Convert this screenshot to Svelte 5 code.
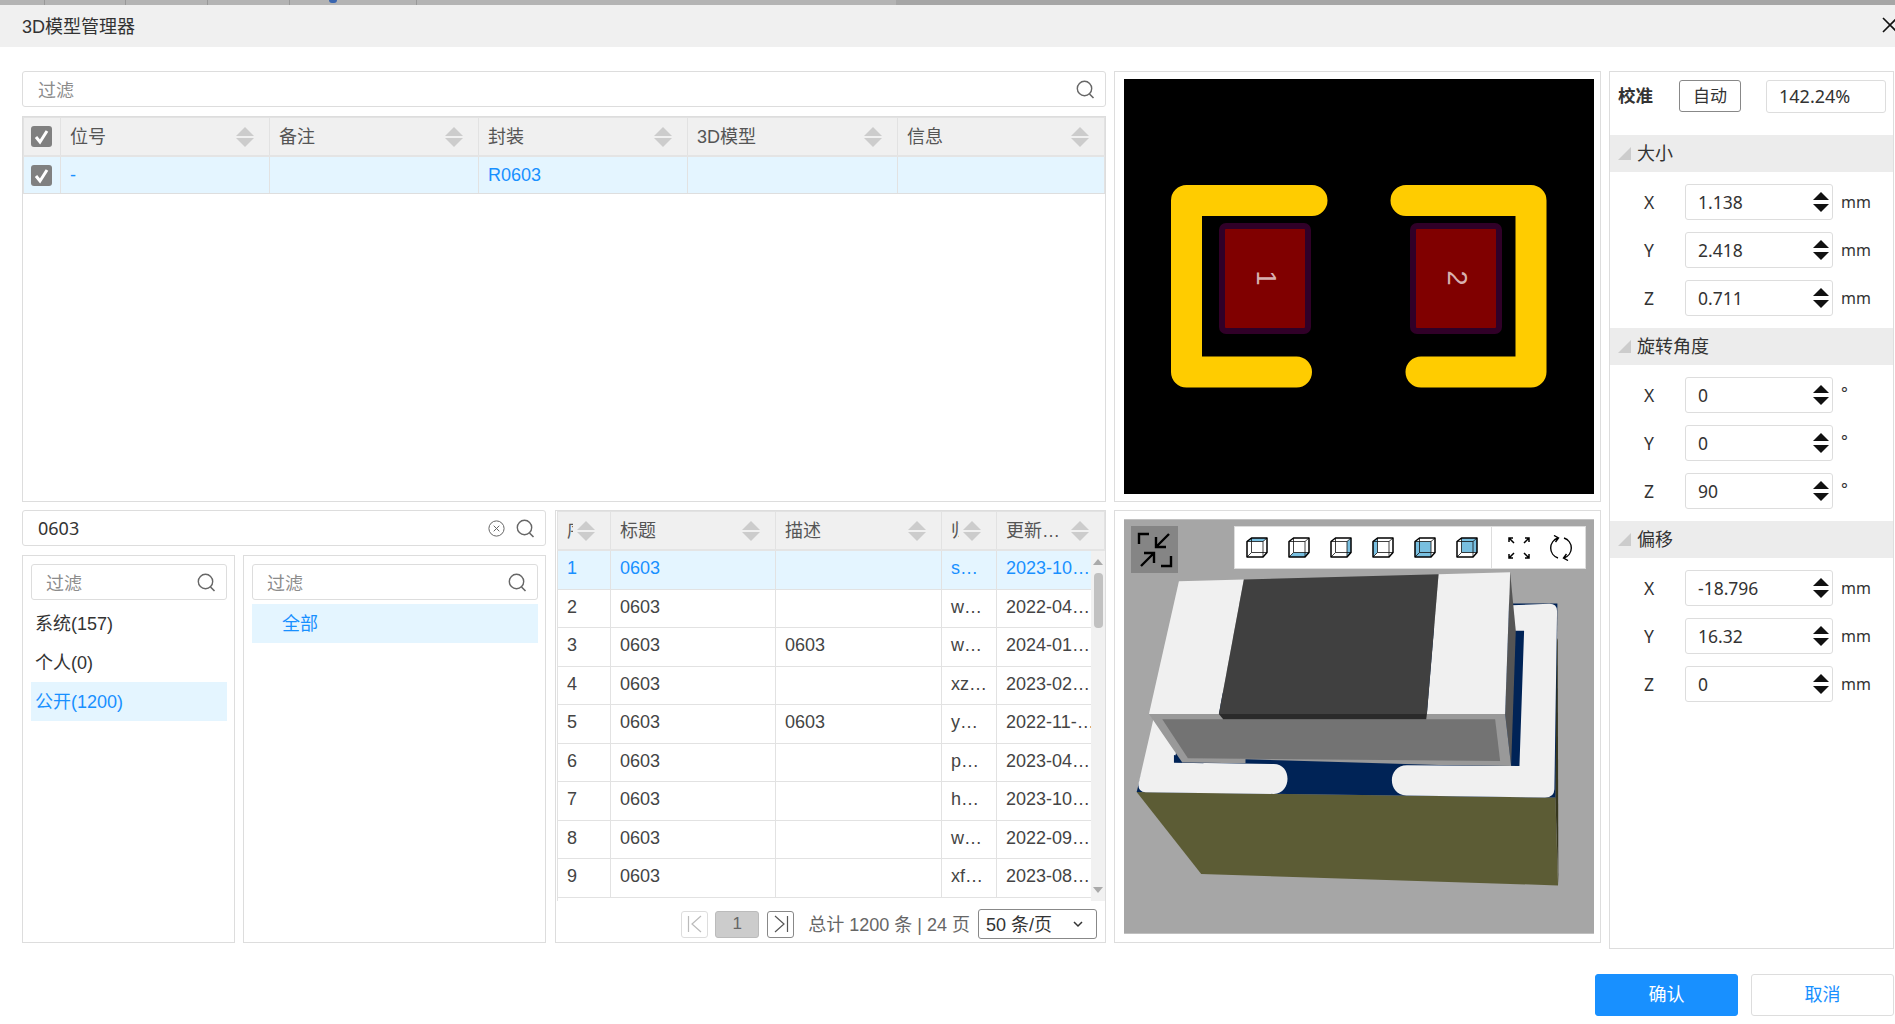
<script lang="ts">
  const partCols = [
    { title: '位号', w: 209 },
    { title: '备注', w: 209 },
    { title: '封装', w: 209 },
    { title: '3D模型', w: 210 },
    { title: '信息', w: 207 },
  ];
  const partRow = ['-', '', 'R0603', '', ''];

  const libCols = [
    { title: '序号', w: 53 },
    { title: '标题', w: 165 },
    { title: '描述', w: 166 },
    { title: '归属者', w: 55 },
    { title: '更新…', w: 108 },
  ];
  const libRows = [
    ['1', '0603', '', 's…', '2023-10…'],
    ['2', '0603', '', 'w…', '2022-04…'],
    ['3', '0603', '0603', 'w…', '2024-01…'],
    ['4', '0603', '', 'xz…', '2023-02…'],
    ['5', '0603', '0603', 'y…', '2022-11-…'],
    ['6', '0603', '', 'p…', '2023-04…'],
    ['7', '0603', '', 'h…', '2023-10…'],
    ['8', '0603', '', 'w…', '2022-09…'],
    ['9', '0603', '', 'xf…', '2023-08…'],
  ];

  const groups = [
    { name: '大小', unit: 'mm', vals: ['1.138', '2.418', '0.711'] },
    { name: '旋转角度', unit: '°', vals: ['0', '0', '90'] },
    { name: '偏移', unit: 'mm', vals: ['-18.796', '16.32', '0'] },
  ];
  const axes = ['X', 'Y', 'Z'];

  // which face of the cube is filled in each view button
  const views = [
    '1,4.5 5.5,1 21,1 17,4.5',
    '1,20 5.5,15.5 21,15.5 17,20',
    '17,4.5 21,1 21,15.5 17,20',
    '1,4.5 5.5,1 5.5,15.5 1,20',
    '1,4.5 17,4.5 17,20 1,20',
    '5.5,1 21,1 21,15.5 5.5,15.5',
  ];
</script>

{#snippet searchIcon()}
  <svg class="search" width="19" height="19" viewBox="0 0 19 19">
    <circle cx="8.5" cy="8.5" r="7.2" fill="none" stroke="#666" stroke-width="1.4" />
    <path d="M13.5 14 L17.5 18" stroke="#666" stroke-width="1.6" fill="none" />
  </svg>
{/snippet}

{#snippet sorter()}
  <span class="sorter"><i class="up"></i><i class="down"></i></span>
{/snippet}

{#snippet check()}
  <span class="check">
    <svg width="21" height="21" viewBox="0 0 21 21">
      <path d="M5 11 L9 16 L16 5" fill="none" stroke="#fff" stroke-width="3" />
    </svg>
  </span>
{/snippet}

<div class="page">
  <div class="backdrop">
    <span style="width:45px"></span>
    <span style="width:81px"></span>
    <span style="width:82px"></span>
    <span style="width:82px"></span>
    <span style="width:127px"><b class="dot"></b></span>
    <span class="wide"></span>
  </div>

  <header class="titlebar">
    <span>3D模型管理器</span>
    <svg class="close" width="16" height="16" viewBox="0 0 16 16">
      <path d="M1 1 L15 15 M15 1 L1 15" stroke="#111" stroke-width="1.6" />
    </svg>
  </header>

  <main class="main">
    <section class="top-left">
      <div class="input top-filter">
        <span class="ph">过滤</span>
        {@render searchIcon()}
      </div>
      <div class="parts">
        <div class="parts-head">
          <div class="cell chk">{@render check()}</div>
          {#each partCols as c}
            <div class="cell hcell" style="width:{c.w}px"><span class="hlabel">{c.title}</span>{@render sorter()}</div>
          {/each}
        </div>
        <div class="parts-row">
          <div class="cell chk">{@render check()}</div>
          {#each partCols as c, i}
            <div class="cell" style="width:{c.w}px">{partRow[i]}</div>
          {/each}
        </div>
      </div>
    </section>

    <section class="preview-2d">
      <svg width="470" height="415" viewBox="0 0 470 415">
        <rect width="470" height="415" fill="#000" />
        <path d="M188 121.5 H62.5 V293 H172.5" fill="none" stroke="#fc0" stroke-width="31" stroke-linecap="round" stroke-linejoin="round" />
        <path d="M282 121.5 H407 V293 H297" fill="none" stroke="#fc0" stroke-width="31" stroke-linecap="round" stroke-linejoin="round" />
        <rect x="98" y="147" width="86" height="105" rx="4" fill="#800000" stroke="#300028" stroke-width="6" />
        <rect x="289" y="147" width="86" height="105" rx="4" fill="#800000" stroke="#300028" stroke-width="6" />
        <text transform="translate(133 199) rotate(90)" class="pad-num" text-anchor="middle">1</text>
        <text transform="translate(324 199) rotate(90)" class="pad-num" text-anchor="middle">2</text>
      </svg>
    </section>

    <aside class="props">
      <div class="calib">
        <b>校准</b>
        <span class="auto">自动</span>
        <span class="scale">142.24%</span>
      </div>
      {#each groups as g}
        <div class="group-head"><i class="corner"></i><span>{g.name}</span></div>
        <div class="group-body">
          {#each g.vals as v, i}
            <div class="prop-row">
              <span class="axis">{axes[i]}</span>
              <div class="num">
                <span>{v}</span>
                <span class="spin"><i class="up"></i><i class="down"></i></span>
              </div>
              <span class="unit" class:deg={g.unit === '°'}>{g.unit}</span>
            </div>
          {/each}
        </div>
      {/each}
    </aside>

    <section class="bottom-left">
      <div class="browser">
        <div class="input lib-search">
          <span class="val">0603</span>
          <svg width="17" height="17" viewBox="0 0 17 17" class="clear">
            <circle cx="8.5" cy="8.5" r="7.6" fill="none" stroke="#666" stroke-width="1" />
            <path d="M5.7 5.7 L11.3 11.3 M11.3 5.7 L5.7 11.3" stroke="#666" stroke-width="1" />
          </svg>
          {@render searchIcon()}
        </div>
        <div class="trees">
          <div class="tree first">
            <div class="input small"><span class="ph">过滤</span>{@render searchIcon()}</div>
            <div class="item">系统(157)</div>
            <div class="item">个人(0)</div>
            <div class="item on">公开(1200)</div>
          </div>
          <div class="tree second">
            <div class="input small"><span class="ph">过滤</span>{@render searchIcon()}</div>
            <div class="item on sub">全部</div>
          </div>
        </div>
      </div>

      <div class="library">
        <div class="lib-head">
          {#each libCols as c}
            <div class="cell hcell" style="width:{c.w}px"><span class="hlabel">{c.title}</span>{@render sorter()}</div>
          {/each}
        </div>
        <div class="lib-main">
          <div class="lib-rows">
            {#each libRows as r, ri}
              <div class="lib-row" class:on={ri === 0}>
                {#each libCols as c, i}
                  <div class="cell" style="width:{c.w}px">{r[i]}</div>
                {/each}
              </div>
            {/each}
          </div>
          <div class="scrollbar">
            <i class="sb-up"></i>
            <b class="thumb"></b>
            <i class="sb-down"></i>
          </div>
        </div>
        <div class="pager">
          <span class="pg-btn dim">
            <svg width="16" height="18" viewBox="0 0 16 18"><path d="M1.5 1 V17 M14 1 L5 9 L14 17" fill="none" stroke="#bbb" stroke-width="1.2" /></svg>
          </span>
          <span class="pg-cur">1</span>
          <span class="pg-btn">
            <svg width="16" height="18" viewBox="0 0 16 18"><path d="M14.5 1 V17 M2 1 L11 9 L2 17" fill="none" stroke="#555" stroke-width="1.2" /></svg>
          </span>
          <span class="total">总计 1200 条 | 24 页</span>
          <span class="size">
            <span>50 条/页</span>
            <svg width="10" height="7" viewBox="0 0 10 7"><path d="M1 1 L5 5 L9 1" fill="none" stroke="#333" stroke-width="1.5" /></svg>
          </span>
        </div>
      </div>
    </section>

    <section class="preview-3d">
      <div class="stage">
        <svg width="470" height="415" viewBox="40 57 1412 1245">
          <rect x="40" y="57" width="1412" height="1245" fill="#a6a6a6" />
          <polygon points="78,876 1336,893 1344,1157 272,1123" fill="#5c5c35" />
          <polygon points="1336,400 1343,420 1345,1157 1336,893" fill="#36361e" />
          <polygon points="78,876 1336,893 1342,310 1200,310 140,640" fill="#002356" />
          <path d="M1205 315 L1318 311 Q1342 311 1341 335 L1333 868 Q1332 893 1305 893 L888 887 C830 885 830 796 890 796 L1228 798 L1242 392 L1205 392 Z" fill="#f0f0f0" />
          <path d="M130 650 L84 850 Q80 876 105 877 L490 882 C545 880 545 792 490 792 L190 788 L220 650 Z" fill="#f0f0f0" />
          <polygon points="190,765 190,788 280,790 232,775" fill="#002356" />
          <polygon points="1200,216 1217,392 1203,798 1185,642" fill="#555" />
          <polygon points="115,642 1185,642 1203,798 985,795 405,778 405,790 215,788" fill="#999" />
          <polygon points="155,658 1155,658 1170,783 232,775" fill="#737373" />
          <polygon points="205,243 400,238 325,642 115,642" fill="#f0f0f0" />
          <polygon points="985,222 1200,216 1185,642 950,642" fill="#f0f0f0" />
          <polygon points="400,238 985,222 950,642 325,642" fill="#404040" />
          <polygon points="325,642 950,642 948,658 338,658" fill="#2a2a2a" />
        </svg>
        <div class="shrink">
          <svg width="36" height="36" viewBox="0 0 36 36">
            <path d="M12 2 H2 V12 M34 24 V34 H24 M32 2 L19 15 M19 5 V15 H29 M4 34 L17 21 M7 21 H17 V31" fill="none" stroke="#000" stroke-width="2.4" />
          </svg>
        </div>
        <div class="toolbar">
          <div class="views">
            {#each views as face}
              <svg width="22" height="21" viewBox="0 0 22 21">
                <polygon points={face} fill="#78bfe0" />
                <g fill="none" stroke="#111" stroke-width="0.8">
                  <path d="M1 4.5 H17 V20 M17 4.5 L21 1 M5.5 1 V15.5 H21 M5.5 15.5 L1 20" />
                </g>
                <path d="M1 4.5 L5.5 1 H21 V15.5 L17 20 H1 Z" fill="none" stroke="#000" stroke-width="1.5" stroke-linejoin="round" />
              </svg>
            {/each}
          </div>
          <div class="fits">
            <svg width="24" height="24" viewBox="0 0 24 24">
              <path d="M2 6 V2 H6 M2 2 L7 7 M22 6 V2 H18 M22 2 L17 7 M2 18 V22 H6 M2 22 L7 17 M22 18 V22 H18 M22 22 L17 17" fill="none" stroke="#000" stroke-width="1.5" />
            </svg>
            <svg width="26" height="26" viewBox="0 0 26 26">
              <path d="M10 3 A10.5 10.5 0 0 0 10 23 M16 23 A10.5 10.5 0 0 0 16 3 M6 0.5 L10.5 3 L7.5 7 M20 25.5 L15.5 23 L18.5 19" fill="none" stroke="#000" stroke-width="1.4" />
            </svg>
          </div>
        </div>
      </div>
    </section>
  </main>

  <footer class="footer">
    <span class="btn primary">确认</span>
    <span class="btn">取消</span>
  </footer>
</div>

<style>
  :global(body) {
    margin: 0;
    background: #fff;
  }
  .page {
    width: 1895px;
    height: 1024px;
    overflow: hidden;
    position: relative;
    font-family: 'Liberation Sans', 'Noto Sans CJK SC', sans-serif;
    font-size: 18px;
    color: #444;
    background: #fff;
  }
  .backdrop {
    display: flex;
    height: 5px;
    background: #a6a6a6;
  }
  .backdrop span {
    background: #b4b4b4;
    border-right: 1px solid #999;
    box-sizing: border-box;
    height: 5px;
  }
  .backdrop .wide {
    width: 479px;
    border-right: 0;
  }
  .dot {
    display: block;
    width: 8px;
    height: 3px;
    margin-left: 39px;
    background: #3a66b0;
    border-radius: 0 0 4px 4px;
  }
  .titlebar {
    box-sizing: border-box;
    height: 42px;
    background: #f0f0f0;
    display: flex;
    align-items: center;
    justify-content: space-between;
    padding: 0 0 3px 22px;
    font-size: 18px;
    color: #333;
  }
  .close {
    margin-right: -3px;
  }

  .main {
    display: grid;
    grid-template-columns: 1084px 487px 285px;
    grid-template-rows: 431px 433px;
    column-gap: 8px;
    row-gap: 8px;
    padding: 24px 0 0 22px;
  }

  .input {
    box-sizing: border-box;
    display: flex;
    align-items: center;
    border: 1px solid #ddd;
    border-radius: 3px;
    background: #fff;
    padding: 0 10px 0 15px;
    font-size: 18px;
  }
  .input .ph {
    flex: 1;
    color: #8c8c8c;
  }
  .top-filter {
    height: 36px;
  }
  .search {
    flex: none;
  }

  .top-left {
    display: flex;
    flex-direction: column;
    gap: 9px;
    min-width: 0;
  }
  .parts {
    flex: 1;
    border: 1px solid #ddd;
    box-sizing: border-box;
  }
  .parts-head,
  .lib-head {
    display: flex;
    box-sizing: border-box;
    height: 40px;
    background: #f0f0f0;
    border-top: 1px solid #e2e2e2;
    border-left: 1px solid #e2e2e2;
    border-bottom: 2px solid #e4e4e4;
  }
  .parts-row {
    display: flex;
    box-sizing: border-box;
    height: 37px;
    background: #e4f5ff;
    color: #1890ff;
    border-left: 1px solid #e2e2e2;
    border-bottom: 1px solid #dedede;
  }
  .cell {
    box-sizing: border-box;
    display: flex;
    align-items: center;
    padding: 0 0 0 9px;
    border-right: 1px solid #e2e2e2;
    overflow: hidden;
    white-space: nowrap;
    flex: none;
  }
  .chk {
    width: 37px;
    padding: 0 0 0 7px;
  }
  .hlabel {
    flex: 1;
    min-width: 0;
    overflow: hidden;
    color: #555;
    margin-bottom: 3px;
  }
  .hcell {
    padding-right: 15px;
  }
  .sorter {
    flex: none;
    display: flex;
    flex-direction: column;
    gap: 2px;
    width: 18px;
    margin-left: 4px;
  }
  .sorter i,
  .spin i {
    display: block;
    width: 0;
    height: 0;
    border-left: 9px solid transparent;
    border-right: 9px solid transparent;
  }
  .sorter .up {
    border-bottom: 9px solid #ccc;
  }
  .sorter .down {
    border-top: 9px solid #ccc;
  }
  .check {
    display: block;
    width: 21px;
    height: 21px;
    background: #808080;
    border-radius: 3px;
  }
  .check svg {
    display: block;
  }

  .preview-2d {
    box-sizing: border-box;
    border: 1px solid #ddd;
    padding: 7px 0 0 9px;
    width: 487px;
  }
  .preview-2d svg,
  .stage > svg {
    display: block;
  }
  .pad-num {
    font-size: 27px;
    fill: #d8b0b0;
    font-family: 'Liberation Sans', sans-serif;
  }

  .props {
    grid-row: span 2;
    box-sizing: border-box;
    height: 878px;
    border: 1px solid #ddd;
    font-family: 'Noto Sans', 'Noto Sans CJK SC', sans-serif;
    color: #333;
  }
  .calib {
    display: flex;
    align-items: flex-start;
    height: 63px;
    box-sizing: border-box;
    padding: 8px 0 0 8px;
  }
  .calib b {
    width: 61px;
    font-size: 17.5px;
    line-height: 30px;
    color: #333;
  }
  .auto {
    box-sizing: border-box;
    width: 62px;
    height: 32px;
    border: 1px solid #888;
    border-radius: 3px;
    text-align: center;
    line-height: 29px;
    font-size: 17px;
  }
  .scale {
    box-sizing: border-box;
    margin-left: 25px;
    width: 120px;
    height: 33px;
    border: 1px solid #ddd;
    border-radius: 3px;
    padding-left: 12px;
    line-height: 30px;
    font-size: 18px;
  }
  .group-head {
    height: 37px;
    background: #ececec;
    display: flex;
    align-items: center;
    padding-left: 8px;
    font-size: 18px;
  }
  .group-head span {
    margin-bottom: 3px;
  }
  .corner {
    width: 0;
    height: 0;
    border-left: 13px solid transparent;
    border-bottom: 13px solid #ccc;
    margin-right: 6px;
  }
  .group-body {
    padding: 12px 0 12px;
  }
  .prop-row {
    display: flex;
    align-items: center;
    height: 36px;
    margin-bottom: 12px;
  }
  .prop-row:last-child {
    margin-bottom: 0;
  }
  .axis {
    width: 75px;
    padding-left: 34px;
    box-sizing: border-box;
    font-size: 17.5px;
  }
  .num {
    box-sizing: border-box;
    width: 148px;
    height: 36px;
    display: flex;
    align-items: center;
    justify-content: space-between;
    border: 1px solid #ddd;
    border-radius: 3px;
    padding: 0 3px 0 12px;
    font-size: 17.5px;
  }
  .spin {
    display: flex;
    flex-direction: column;
    gap: 4px;
  }
  .spin i {
    border-left-width: 8px;
    border-right-width: 8px;
  }
  .spin .up {
    border-bottom: 8px solid #111;
  }
  .spin .down {
    border-top: 8px solid #111;
  }
  .unit {
    margin-left: 8px;
    font-size: 16px;
  }
  .unit.deg {
    margin-top: -4px;
    margin-left: 8px;
  }

  .bottom-left {
    display: flex;
    gap: 9px;
    min-width: 0;
  }
  .browser {
    flex: none;
    width: 524px;
    display: flex;
    flex-direction: column;
    gap: 9px;
  }
  .lib-search {
    height: 36px;
  }
  .val {
    flex: 1;
    font-family: 'Noto Sans', sans-serif;
    color: #333;
  }
  .clear {
    margin-right: 11px;
  }
  .trees {
    flex: 1;
    display: flex;
    gap: 8px;
  }
  .tree {
    box-sizing: border-box;
    border: 1px solid #ddd;
    padding: 8px 7px 0 8px;
  }
  .tree.first {
    width: 213px;
  }
  .tree.second {
    flex: 1;
  }
  .input.small {
    height: 36px;
    margin-bottom: 4px;
    padding: 0 10px 0 14px;
  }
  .item {
    height: 39px;
    line-height: 41px;
    padding-left: 4px;
    color: #333;
  }
  .item.on {
    background: #e4f5ff;
    color: #1890ff;
  }
  .item.sub {
    padding-left: 30px;
  }

  .library {
    flex: none;
    width: 551px;
    box-sizing: border-box;
    border: 1px solid #ddd;
    display: flex;
    flex-direction: column;
    padding-left: 1px;
  }
  .lib-main {
    display: flex;
    height: 350px;
  }
  .lib-rows {
    flex: none;
    width: 534px;
    box-sizing: border-box;
    border-left: 1px solid #e2e2e2;
    overflow: hidden;
  }
  .lib-row {
    display: flex;
    height: 38.5px;
    box-sizing: border-box;
    border-bottom: 1px solid #e2e2e2;
  }
  .lib-row .cell {
    padding-bottom: 2px;
  }
  .lib-row.on {
    background: #e4f5ff;
    color: #1890ff;
  }
  .lib-row .cell:last-child {
    border-right: 0;
  }
  .scrollbar {
    flex: none;
    width: 14px;
    background: #f1f1f1;
    display: flex;
    flex-direction: column;
    align-items: center;
  }
  .sb-up,
  .sb-down {
    width: 0;
    height: 0;
    border-left: 5px solid transparent;
    border-right: 5px solid transparent;
  }
  .sb-up {
    border-bottom: 6px solid #aaa;
    margin-top: 8px;
  }
  .sb-down {
    border-top: 6px solid #aaa;
    margin-top: auto;
    margin-bottom: 8px;
  }
  .thumb {
    width: 9px;
    height: 55px;
    margin-top: 8px;
    background: #c1c1c1;
    border-radius: 4px;
  }
  .pager {
    flex: 1;
    display: flex;
    align-items: center;
    justify-content: flex-end;
    padding: 5px 8px 0 0;
    box-sizing: border-box;
    gap: 8px;
  }
  .pg-btn {
    box-sizing: border-box;
    display: flex;
    align-items: center;
    justify-content: center;
    width: 27px;
    height: 27px;
    border: 1px solid #888;
    border-radius: 3px;
    margin-left: 0;
  }
  .pg-btn.dim {
    border-color: #ddd;
    margin-right: -1px;
  }
  .pg-cur {
    box-sizing: border-box;
    width: 44px;
    height: 27px;
    background: #ccc;
    border: 1px solid #bbb;
    border-radius: 3px;
    text-align: center;
    line-height: 24px;
    color: #666;
    font-size: 17px;
  }
  .total {
    margin: 0 0 2px 6px;
    color: #666;
  }
  .size {
    box-sizing: border-box;
    width: 119px;
    height: 30px;
    border: 1px solid #888;
    border-radius: 3px;
    display: flex;
    align-items: center;
    justify-content: space-between;
    padding: 0 13px 0 7px;
    color: #333;
  }
  .size span {
    margin-bottom: 2px;
  }

  .preview-3d {
    box-sizing: border-box;
    border: 1px solid #ddd;
    padding: 8px 0 0 9px;
    width: 487px;
  }
  .stage {
    position: relative;
    width: 470px;
    height: 415px;
  }
  .shrink {
    position: absolute;
    left: 7px;
    top: 7px;
    width: 47px;
    height: 47px;
    background: #858585;
    display: flex;
    align-items: center;
    justify-content: center;
  }
  .toolbar {
    position: absolute;
    left: 110px;
    top: 7px;
    width: 352px;
    height: 43px;
    box-sizing: border-box;
    background: #fff;
    border: 1px solid #ddd;
    display: flex;
    align-items: center;
  }
  .views {
    display: flex;
    gap: 20px;
    width: 257px;
    box-sizing: border-box;
    padding-left: 11px;
    height: 100%;
    align-items: center;
    border-right: 1px solid #ddd;
  }
  .fits {
    flex: 1;
    display: flex;
    align-items: center;
    gap: 17px;
    padding-left: 15px;
  }
  .views svg,
  .fits svg {
    flex: none;
    display: block;
  }

  .footer {
    display: flex;
    justify-content: flex-end;
    gap: 13px;
    padding: 31px 1px 0 0;
  }
  .btn {
    box-sizing: border-box;
    width: 143px;
    height: 42px;
    border: 1px solid #ddd;
    border-radius: 3px;
    text-align: center;
    line-height: 40px;
    color: #1890ff;
  }
  .btn.primary {
    background: #1890ff;
    border-color: #1890ff;
    color: #fff;
  }
</style>
